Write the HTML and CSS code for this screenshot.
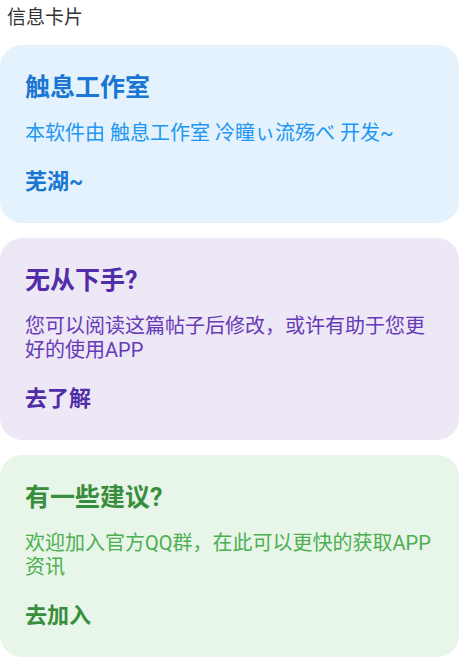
FILE: index.html
```html
<!DOCTYPE html>
<html lang="zh-CN">
<head>
<meta charset="utf-8">
<title>信息卡片</title>
<link rel="stylesheet" href="styles.css">
</head>
<body>
  <div class="page">
    <div class="header">信息卡片</div>
    <div class="cards">
      <div class="card card-blue">
        <div class="card-title">触息工作室</div>
        <div class="card-desc">本软件由 触息工作室 冷瞳ぃ流殇べ 开发~</div>
        <div class="card-action">芜湖~</div>
      </div>
      <div class="card card-purple">
        <div class="card-title">无从下手?</div>
        <div class="card-desc">您可以阅读这篇帖子后修改，或许有助于您更好的使用APP</div>
        <div class="card-action">去了解</div>
      </div>
      <div class="card card-green">
        <div class="card-title">有一些建议?</div>
        <div class="card-desc">欢迎加入官方QQ群，在此可以更快的获取APP资讯</div>
        <div class="card-action">去加入</div>
      </div>
    </div>
  </div>
</body>
</html>
```
FILE: styles.css
```css
html, body {
  margin: 0;
  padding: 0;
  background: #ffffff;
}

body {
  font-family: Roboto, "Noto Sans CJK SC", "Noto Sans", sans-serif;
}

.page {
  width: 474px;
  display: flex;
  flex-direction: column;
}

.header {
  padding-left: 7px;
  font-size: 19px;
  line-height: 36px;
  height: 36px;
  color: #333333;
  margin-bottom: 9px;
}

.cards {
  display: flex;
  flex-direction: column;
  gap: 15px;
  width: 459px;
}

.card {
  border-radius: 22px;
  padding: 24px 25px 26px 25px;
  display: flex;
  flex-direction: column;
}

.card-title {
  font-size: 25px;
  line-height: 38px;
  font-weight: 700;
  margin-bottom: 14px;
}

.card-desc {
  font-size: 20px;
  line-height: 24px;
  margin-bottom: 22px;
}

.card-action {
  font-size: 22px;
  line-height: 30px;
  font-weight: 700;
}

.card-blue { background: #e3f2fd; }
.card-blue .card-title { color: #1976d2; }
.card-blue .card-desc { color: #2196f3; }
.card-blue .card-action { color: #1976d2; }

.card-purple { background: #ede7f6; }
.card-purple .card-title { color: #512da8; }
.card-purple .card-desc { color: #673ab7; }
.card-purple .card-action { color: #512da8; }

.card-green { background: #e8f5e9; }
.card-green .card-title { color: #388e3c; }
.card-green .card-desc { color: #4caf50; }
.card-green .card-action { color: #388e3c; }
```
